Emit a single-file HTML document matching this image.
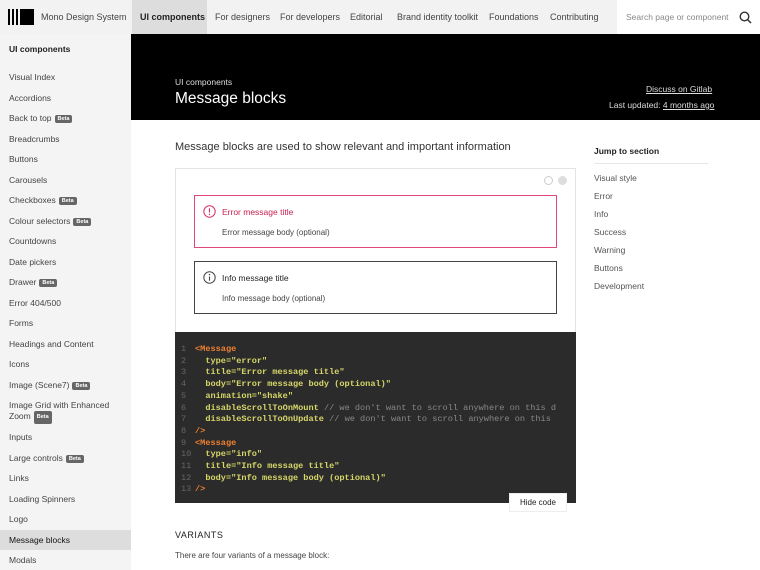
<!DOCTYPE html>
<html><head><meta charset="utf-8"><style>
*{margin:0;padding:0;box-sizing:border-box}
body{width:760px;height:570px;overflow:hidden;font-family:"Liberation Sans",sans-serif;background:#fff;color:#333;position:relative}
.abs{position:absolute;white-space:nowrap}
.top{position:absolute;left:0;top:0;width:760px;height:34px;background:#f2f2f2}
.nav{font-size:9px;color:#444}
.side{position:absolute;left:0;top:34px;width:131px;height:536px;background:#f4f4f4}
.si{position:absolute;left:9px;font-size:8.5px;color:#444;white-space:nowrap}
.beta{display:inline-block;background:#666;color:#fff;font-size:5.5px;font-weight:bold;padding:1px 3px;border-radius:2px;vertical-align:1px;margin-left:3px}
.code{position:absolute;left:175px;top:332px;width:401px;height:171px;background:#2b2b2b;font-family:"Liberation Mono",monospace;font-size:8.6px;line-height:11.7px;padding:12px 0 0 6px;white-space:pre;color:#d6d66a;font-weight:bold}
.ln{color:#666;font-weight:normal;display:inline-block;width:14px}
.t{color:#f08030}.c{color:#888;font-weight:normal}
.jl{position:absolute;left:594px;font-size:8.5px;color:#555}
</style></head><body>
<div class="top"></div>
<div class="abs" style="left:8px;top:9px;width:26px;height:16px;">
<div style="position:absolute;left:0;top:0;width:2px;height:16px;background:#000"></div>
<div style="position:absolute;left:4px;top:0;width:2px;height:16px;background:#000"></div>
<div style="position:absolute;left:8px;top:0;width:2px;height:16px;background:#000"></div>
<div style="position:absolute;left:12px;top:0;width:14px;height:16px;background:#000"></div>
</div>
<div class="abs nav" style="left:41px;top:12px">Mono Design System</div>
<div class="abs" style="left:132px;top:0;width:75px;height:34px;background:#ddd"></div>
<div class="abs nav" style="left:140px;top:12px;font-weight:bold;color:#222">UI components</div>
<div class="abs nav" style="left:215px;top:12px">For designers</div>
<div class="abs nav" style="left:280px;top:12px">For developers</div>
<div class="abs nav" style="left:350px;top:12px">Editorial</div>
<div class="abs nav" style="left:397px;top:12px">Brand identity toolkit</div>
<div class="abs nav" style="left:489px;top:12px">Foundations</div>
<div class="abs nav" style="left:550px;top:12px">Contributing</div>
<div class="abs" style="left:617px;top:0;width:143px;height:34px;background:#fff"></div>
<div class="abs nav" style="left:626px;top:12px;color:#888;font-size:8.5px">Search page or component</div>
<svg class="abs" style="left:739px;top:11px" width="13" height="13" viewBox="0 0 13 13"><circle cx="5.5" cy="5.5" r="4.3" fill="none" stroke="#333" stroke-width="1.4"/><line x1="8.6" y1="8.6" x2="12" y2="12" stroke="#333" stroke-width="1.5"/></svg>

<div class="side">
<div class="si" style="top:10px;font-weight:bold;color:#222">UI components</div>
<div class="si" style="top:38px">Visual Index</div>
<div class="si" style="top:59px">Accordions</div>
<div class="si" style="top:79px">Back to top<span class="beta">Beta</span></div>
<div class="si" style="top:100px">Breadcrumbs</div>
<div class="si" style="top:120px">Buttons</div>
<div class="si" style="top:141px">Carousels</div>
<div class="si" style="top:161px">Checkboxes<span class="beta">Beta</span></div>
<div class="si" style="top:182px">Colour selectors<span class="beta">Beta</span></div>
<div class="si" style="top:202px">Countdowns</div>
<div class="si" style="top:223px">Date pickers</div>
<div class="si" style="top:243px">Drawer<span class="beta">Beta</span></div>
<div class="si" style="top:264px">Error 404/500</div>
<div class="si" style="top:284px">Forms</div>
<div class="si" style="top:305px">Headings and Content</div>
<div class="si" style="top:325px">Icons</div>
<div class="si" style="top:346px">Image (Scene7)<span class="beta">Beta</span></div>
<div class="si" style="top:366px;line-height:11px">Image Grid with Enhanced<br>Zoom<span class="beta">Beta</span></div>
<div class="si" style="top:398px">Inputs</div>
<div class="si" style="top:419px">Large controls<span class="beta">Beta</span></div>
<div class="si" style="top:439px">Links</div>
<div class="si" style="top:460px">Loading Spinners</div>
<div class="si" style="top:480px">Logo</div>
<div style="position:absolute;left:0;top:496px;width:131px;height:20px;background:#ddd"></div>
<div class="si" style="top:501px;color:#111">Message blocks</div>
<div class="si" style="top:521px">Modals</div>
</div>

<div class="abs" style="left:131px;top:34px;width:629px;height:86px;background:#000"></div>
<div class="abs" style="left:175px;top:77px;font-size:8.5px;color:#ddd">UI components</div>
<div class="abs" style="left:175px;top:90px;font-size:15.5px;color:#fff">Message blocks</div>
<div class="abs" style="left:646px;top:84px;font-size:8.5px;color:#ddd;text-decoration:underline">Discuss on Gitlab</div>
<div class="abs" style="left:609px;top:100px;font-size:8.5px;color:#ddd">Last updated: <u>4 months ago</u></div>

<div class="abs" style="left:175px;top:141px;font-size:11px;color:#333">Message blocks are used to show relevant and important information</div>

<div class="abs" style="left:175px;top:168px;width:401px;height:165px;border:1px solid #e4e4e4"></div>
<div class="abs" style="left:544px;top:176px;width:9px;height:9px;border:1px solid #ccc;border-radius:50%"></div>
<div class="abs" style="left:558px;top:176px;width:9px;height:9px;background:#ddd;border-radius:50%"></div>
<div class="abs" style="left:194px;top:195px;width:363px;height:53px;border:1px solid #e0457b"></div>
<svg class="abs" style="left:203px;top:205px" width="13" height="13" viewBox="0 0 13 13"><circle cx="6.5" cy="6.5" r="5.7" fill="none" stroke="#d63068" stroke-width="1"/><line x1="6.5" y1="3.3" x2="6.5" y2="7.6" stroke="#d63068" stroke-width="1.1"/><circle cx="6.5" cy="9.5" r=".7" fill="#d63068"/></svg>
<div class="abs" style="left:222px;top:207px;font-size:8.5px;color:#c8204f">Error message title</div>
<div class="abs" style="left:222px;top:228px;font-size:8px;color:#444">Error message body (optional)</div>
<div class="abs" style="left:194px;top:261px;width:363px;height:53px;border:1px solid #444"></div>
<svg class="abs" style="left:203px;top:271px" width="13" height="13" viewBox="0 0 13 13"><circle cx="6.5" cy="6.5" r="5.7" fill="none" stroke="#444" stroke-width="1"/><line x1="6.5" y1="5.5" x2="6.5" y2="9.7" stroke="#444" stroke-width="1.1"/><circle cx="6.5" cy="3.6" r=".7" fill="#444"/></svg>
<div class="abs" style="left:222px;top:273px;font-size:8.5px;color:#222">Info message title</div>
<div class="abs" style="left:222px;top:294px;font-size:8px;color:#444">Info message body (optional)</div>

<div class="code"><span class="ln">1</span><span class="t">&lt;Message</span>
<span class="ln">2</span>  type="error"
<span class="ln">3</span>  title="Error message title"
<span class="ln">4</span>  body="Error message body (optional)"
<span class="ln">5</span>  animation="shake"
<span class="ln">6</span>  disableScrollToOnMount <span class="c">// we don't want to scroll anywhere on this d</span>
<span class="ln">7</span>  disableScrollToOnUpdate <span class="c">// we don't want to scroll anywhere on this</span>
<span class="ln">8</span><span class="t">/&gt;</span>
<span class="ln">9</span><span class="t">&lt;Message</span>
<span class="ln">10</span>  type="info"
<span class="ln">11</span>  title="Info message title"
<span class="ln">12</span>  body="Info message body (optional)"
<span class="ln">13</span><span class="t">/&gt;</span></div>
<div class="abs" style="left:175px;top:332px;width:401px;height:171px;overflow:hidden;pointer-events:none"></div>
<div class="abs" style="left:509px;top:493px;width:58px;height:19px;background:#fff;border:1px solid #eee;font-size:8px;color:#222;text-align:center;line-height:18px">Hide code</div>

<div class="abs" style="left:175px;top:530px;font-size:9px;color:#222;letter-spacing:.5px">VARIANTS</div>
<div class="abs" style="left:175px;top:551px;font-size:8px;color:#444">There are four variants of a message block:</div>

<div class="jl" style="top:146px;font-weight:bold;color:#222">Jump to section</div>
<div class="abs" style="left:594px;top:163px;width:114px;height:1px;background:#e6e6e6"></div>
<div class="jl" style="top:173px">Visual style</div>
<div class="jl" style="top:191px">Error</div>
<div class="jl" style="top:209px">Info</div>
<div class="jl" style="top:227px">Success</div>
<div class="jl" style="top:245px">Warning</div>
<div class="jl" style="top:263px">Buttons</div>
<div class="jl" style="top:281px">Development</div>
</body></html>
